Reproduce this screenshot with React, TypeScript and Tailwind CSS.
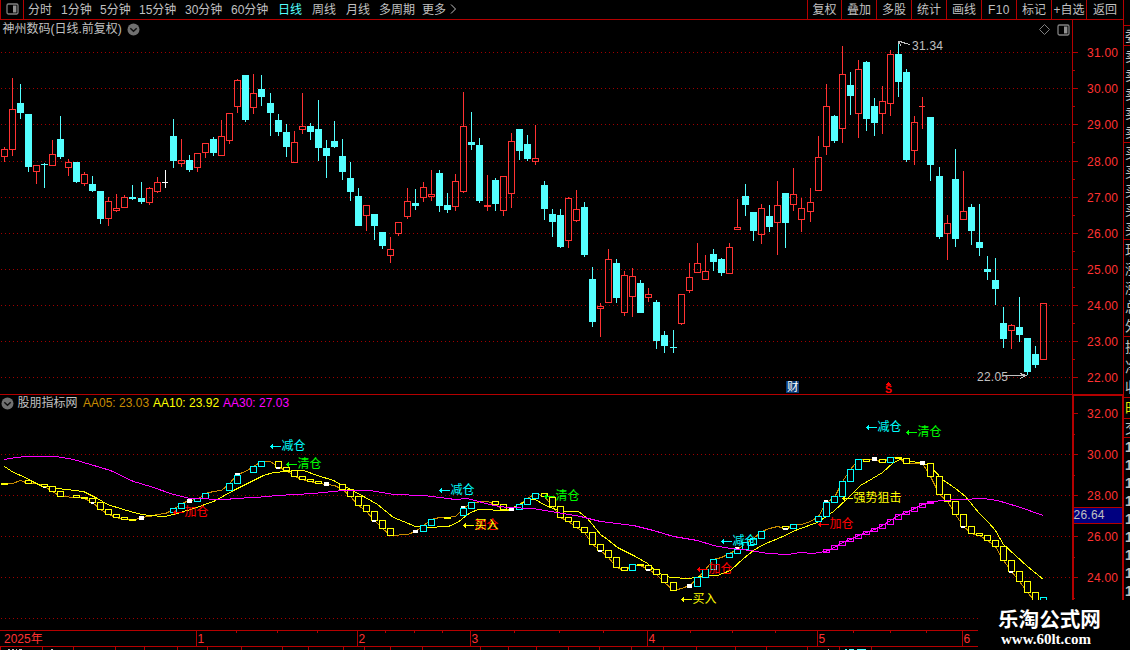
import type { ReactNode } from 'react';

type Kind = 'up' | 'down' | 'flat';
// centre x, high, body top, body bottom, low, kind
type Candle = [number, number, number, number, number, Kind];

const U = 'up' as const;
const D = 'down' as const;
const F = 'flat' as const;

const CANDLES: Candle[] = [
  [4, 147, 149, 157, 162, U], [12, 78, 109, 150, 156, U], [20, 84, 103, 113, 119, D], [28, 114, 114, 167, 172, D],
  [36, 165, 165, 172, 184, U], [44, 163, 164, 165, 188, D], [52, 140, 154, 166, 166, U], [60, 116, 139, 157, 159, D],
  [68, 159, 162, 168, 176, U], [76, 162, 162, 182, 183, D], [84, 172, 174, 184, 186, U], [92, 176, 184, 191, 192, D],
  [100, 191, 191, 219, 224, D], [108, 197, 201, 219, 226, U], [116, 194, 208, 211, 212, U], [124, 195, 197, 208, 208, U],
  [132, 185, 197, 199, 200, D], [141, 182, 198, 202, 204, D], [149, 187, 188, 203, 205, U], [157, 177, 182, 192, 193, U],
  [165, 170, 182, 183, 188, F], [173, 119, 136, 161, 168, D], [181, 139, 160, 164, 167, U], [189, 155, 160, 170, 172, D],
  [197, 153, 153, 168, 172, U], [205, 143, 143, 153, 158, U], [213, 137, 139, 153, 156, D], [221, 120, 136, 156, 156, U],
  [229, 113, 113, 141, 144, U], [237, 79, 80, 107, 113, U], [245, 75, 75, 120, 122, D], [253, 74, 93, 108, 114, U],
  [261, 75, 89, 97, 106, D], [270, 93, 103, 113, 136, D], [278, 114, 120, 132, 136, D], [286, 124, 132, 147, 157, D],
  [294, 131, 142, 163, 163, U], [302, 93, 126, 130, 134, U], [310, 123, 126, 132, 140, D], [318, 100, 129, 148, 161, D],
  [326, 140, 148, 156, 178, D], [334, 121, 141, 147, 148, D], [342, 139, 156, 172, 180, D], [350, 162, 178, 192, 201, D],
  [358, 188, 196, 226, 226, D], [366, 205, 205, 216, 231, U], [374, 214, 214, 226, 240, D], [382, 232, 232, 246, 249, D],
  [390, 237, 249, 256, 263, U], [398, 222, 222, 234, 236, U], [407, 188, 201, 217, 219, U], [415, 189, 203, 206, 210, D],
  [423, 182, 187, 198, 202, U], [431, 170, 194, 197, 201, U], [439, 170, 173, 206, 212, D], [447, 193, 205, 210, 213, D],
  [455, 174, 181, 207, 211, U], [463, 92, 126, 192, 193, U], [471, 112, 142, 145, 150, D], [479, 138, 145, 201, 203, D],
  [487, 175, 205, 207, 211, U], [495, 178, 180, 204, 211, D], [503, 176, 176, 211, 216, U], [511, 133, 141, 194, 208, U],
  [519, 129, 129, 151, 160, D], [527, 135, 144, 159, 161, D], [535, 125, 158, 162, 165, U], [544, 181, 185, 209, 220, D],
  [552, 209, 214, 222, 237, D], [560, 209, 215, 247, 248, D], [568, 197, 198, 241, 248, U], [576, 190, 209, 221, 222, U],
  [584, 202, 207, 255, 257, D], [592, 267, 279, 322, 327, D], [600, 303, 306, 309, 337, U], [608, 249, 259, 303, 303, U],
  [616, 259, 263, 298, 303, D], [624, 271, 275, 313, 316, U], [632, 268, 276, 297, 317, U], [640, 280, 283, 313, 313, D],
  [648, 288, 294, 298, 302, U], [656, 300, 302, 341, 349, D], [664, 331, 335, 346, 353, D], [673, 330, 347, 348, 353, D],
  [681, 294, 294, 324, 325, U], [689, 263, 277, 291, 293, U], [697, 243, 263, 273, 273, U], [705, 255, 271, 280, 280, U],
  [713, 249, 254, 262, 271, D], [721, 258, 259, 273, 276, D], [729, 243, 247, 274, 274, U], [737, 199, 227, 230, 230, U],
  [745, 184, 196, 205, 216, D], [753, 212, 212, 231, 241, D], [761, 204, 208, 235, 244, U], [769, 205, 216, 227, 232, D],
  [777, 181, 205, 223, 255, U], [785, 193, 193, 223, 248, D], [793, 168, 194, 205, 211, U], [801, 198, 208, 220, 232, U],
  [810, 188, 202, 212, 222, U], [818, 136, 157, 191, 191, U], [826, 84, 106, 147, 155, U], [834, 115, 116, 141, 143, D],
  [842, 46, 74, 129, 143, U], [850, 72, 85, 96, 115, D], [858, 60, 69, 114, 138, U], [866, 61, 62, 119, 131, D],
  [874, 98, 106, 123, 136, D], [882, 86, 101, 114, 134, U], [890, 50, 54, 104, 116, U], [898, 41, 54, 82, 97, D],
  [906, 69, 72, 160, 162, D], [914, 116, 122, 151, 165, U], [922, 97, 106, 107, 129, U], [930, 117, 117, 165, 181, D],
  [939, 167, 176, 237, 239, D], [947, 215, 223, 234, 260, U], [955, 149, 179, 239, 247, D], [963, 171, 211, 220, 220, U],
  [971, 204, 207, 231, 245, D], [979, 204, 242, 248, 256, D], [987, 256, 269, 272, 280, D], [995, 258, 280, 289, 305, D],
  [1003, 307, 323, 339, 348, D], [1011, 324, 325, 331, 349, U], [1019, 297, 327, 335, 342, D], [1027, 338, 338, 372, 375, D],
  [1035, 346, 354, 365, 368, D], [1043, 303, 303, 360, 360, U],
];

const KIND_COLOR: Record<Kind, string> = { up: '#ff3232', down: '#54ffff', flat: '#ffffff' };

const Y = '#ffff00';
const C = '#00ffff';
const W = '#ffffff';
const M = '#ff00ff';

// centre x, top, bottom, stroke
type Box = [number, number, number, string];

const BOXES: Box[] = [
  [28, 480, 484, Y], [44, 484, 487, Y], [52, 486, 492, Y], [60, 491, 497, Y], [76, 495, 498, Y], [84, 497, 499, Y],
  [92, 498, 503, Y], [100, 502, 510, Y], [108, 509, 515, Y], [116, 514, 518, Y], [124, 517, 520, Y], [132, 519, 521, Y],
  [173, 508, 513, C], [181, 503, 509, C], [197, 498, 502, C], [205, 493, 499, C], [229, 483, 491, C], [237, 475, 484, C],
  [253, 466, 473, C], [261, 461, 467, C], [278, 461, 468, Y], [286, 467, 471, Y], [294, 470, 477, Y], [302, 476, 480, Y],
  [310, 479, 482, Y], [318, 481, 484, Y], [342, 484, 490, Y], [350, 489, 497, Y], [358, 496, 506, Y], [366, 505, 512, Y],
  [374, 511, 521, Y], [382, 520, 529, Y], [390, 528, 536, Y], [423, 525, 532, C], [431, 519, 526, C], [447, 517, 519, Y],
  [463, 508, 516, C], [471, 502, 509, C], [495, 501, 505, Y], [503, 504, 510, Y], [519, 504, 510, C], [527, 498, 505, C],
  [535, 493, 499, C], [544, 493, 497, Y], [552, 497, 507, Y], [560, 506, 518, Y], [568, 517, 522, Y], [576, 521, 528, Y],
  [584, 527, 533, Y], [592, 532, 545, Y], [600, 544, 551, Y], [608, 550, 558, Y], [616, 557, 568, Y], [624, 567, 571, Y],
  [632, 564, 571, C], [640, 564, 566, Y], [648, 565, 570, Y], [656, 569, 575, Y], [664, 574, 583, Y], [673, 582, 591, Y],
  [697, 577, 587, C], [705, 569, 578, C], [713, 559, 570, C], [729, 553, 558, C], [737, 549, 554, C], [745, 542, 550, C],
  [753, 538, 545, C], [761, 531, 539, C], [785, 526, 529, Y], [793, 524, 529, C], [818, 516, 522, C], [826, 502, 517, C],
  [834, 496, 503, C], [842, 481, 497, C], [850, 469, 482, C], [858, 459, 470, C], [866, 459, 462, Y], [882, 459, 463, Y],
  [890, 457, 463, C], [898, 457, 459, Y], [906, 458, 464, Y], [930, 463, 477, Y], [939, 476, 495, Y], [947, 494, 502, Y],
  [955, 501, 515, Y], [963, 514, 527, Y], [971, 526, 534, Y], [979, 533, 536, Y], [987, 535, 541, Y], [995, 540, 547, Y],
  [1003, 546, 561, Y], [1011, 560, 572, Y], [1019, 571, 582, Y], [1027, 581, 593, Y], [1035, 592, 602, Y], [1043, 597, 602, C],
  [826, 549, 553, M], [834, 545, 550, M], [842, 541, 546, M], [850, 538, 542, M], [858, 534, 539, M], [866, 531, 535, M],
  [874, 528, 532, M], [882, 524, 529, M], [890, 519, 525, M], [898, 514, 520, M], [906, 511, 515, M], [914, 507, 512, M],
  [922, 503, 508, M], [930, 501, 504, M],
];

// x, y, width, height
const MARKS: [number, number, number, number][] = [
  [43, 487, 3, 1], [91, 502, 3, 2], [139, 516, 5, 4], [187, 499, 5, 4], [235, 473, 5, 2], [276, 467, 4, 2],
  [324, 482, 5, 4], [372, 520, 4, 2], [413, 530, 5, 3], [461, 506, 4, 2], [509, 508, 5, 3], [598, 550, 4, 2],
  [646, 569, 4, 2], [687, 584, 5, 4], [735, 547, 4, 2], [783, 528, 5, 2], [824, 500, 4, 2], [872, 457, 5, 4],
  [920, 461, 5, 4], [961, 526, 4, 2], [1009, 571, 4, 2],
];

const AA05 =
  '4,484 12,483 20,480 28,483 36,483 44,486 52,491 60,496 76,497 84,498 92,502 100,509 108,514 116,517 124,519 132,520 141,517 149,516 157,514 165,513 173,509 181,503 189,500 197,499 205,493 213,491 221,490 229,483 237,474 245,471 253,466 261,461 270,461 278,467 286,470 294,476 302,479 310,481 318,483 326,484 334,485 342,489 350,496 358,505 366,511 374,520 382,528 390,535 407,534 415,531 423,525 431,519 439,517 447,517 455,516 463,508 471,502 487,501 495,504 503,509 511,509 519,504 527,498 535,493 544,496 552,506 560,517 568,521 576,527 584,532 592,544 600,550 608,557 616,567 624,570 632,565 640,565 648,569 656,574 664,582 673,590 681,588 689,585 697,578 705,569 713,559 721,557 729,553 737,549 745,543 753,538 761,531 769,528 777,526 785,528 793,525 801,524 810,521 818,516 826,502 834,497 842,481 850,469 858,459 874,459 882,462 890,457 898,458 906,463 922,463 930,476 939,494 947,501 955,514 963,526 971,533 979,535 987,540 995,546 1003,560 1011,571 1019,581 1027,592 1035,601';
const AA10 =
  '4,466 13,472 25,477 30,480 40,485 57,488 83,491 97,498 107,504 123,509 137,513 148,515 165,516 180,512 193,508 213,501 233,490 247,483 263,475 273,472 287,471 303,470 317,475 333,480 350,489 363,496 377,504 393,517 403,521 415,526 425,527 448,526 457,522 470,512 478,509 507,510 515,506 527,500 535,499 543,504 560,511 578,511 587,518 600,534 607,539 617,547 633,555 647,563 657,572 670,577 688,578 707,575 717,575 730,570 743,558 753,550 763,544 780,537 797,529 817,522 833,511 847,498 860,485 867,481 882,472 893,462 900,459 923,463 930,466 942,479 955,488 965,496 978,512 988,522 995,530 1003,544 1015,555 1027,566 1043,579';
const AA30 =
  '4,459 15,457 27,456 55,456 73,459 90,464 110,470 133,481 150,486 173,494 190,498 227,499 233,498 255,497 277,495 312,493 343,490 370,490 393,494 423,495 455,499 467,498 493,505 507,507 533,508 550,511 580,516 600,521 633,525 653,530 673,536 697,540 713,545 730,548 750,550 767,553 787,554 800,552 813,553 825,551 834,547 842,542 850,539 858,535 866,532 874,529 882,525 890,520 898,515 906,512 914,508 922,504 930,502 940,500 960,499 983,498 997,500 1017,506 1043,515';

// arrow x, arrow y, colour, text
const SIGNALS: [number, number, string, string][] = [
  [271, 446, C, '减仓'], [287, 464, '#00ff00', '清仓'], [174, 512, '#ff0000', '加仓'], [440, 490, C, '减仓'],
  [464, 525, '#ff0000', '加仓'], [464, 525, Y, '买入'], [545, 496, '#00ff00', '清仓'], [682, 599, Y, '买入'],
  [698, 569, '#ff0000', '加仓'], [722, 541, C, '减仓'], [819, 524, '#ff0000', '加仓'], [843, 498, Y, '强势狙击'],
  [867, 427, C, '减仓'], [907, 432, '#00ff00', '清仓'],
];

const UPPER_GRID = [52, 88, 124, 161, 197, 233, 269, 305, 341, 377];
const LOWER_GRID = [454, 495, 536, 577, 618];
const RED = '#b40000';

function Grid({ rows }: { rows: number[] }) {
  return (
    <g stroke="#a00000" strokeDasharray="1 3">
      {rows.map((y) => (
        <line key={y} x1={1} x2={1072} y1={y + 0.5} y2={y + 0.5} />
      ))}
    </g>
  );
}

function CandleShape({ c: [x, high, top, bottom, low, kind] }: { c: Candle }) {
  const color = KIND_COLOR[kind];
  const h = bottom - top;
  const narrow = h === 1 && kind !== 'down';
  const hollow = kind === 'up' && h > 2;
  return (
    <g fill={color}>
      {top > high && <rect x={x} y={high} width={1} height={top - high} />}
      {low > bottom && <rect x={x} y={bottom} width={1} height={low - bottom} />}
      {hollow ? (
        <rect x={x - 2.5} y={top + 0.5} width={6} height={h - 1} fill="none" stroke={color} />
      ) : (
        <rect x={x - 3} y={top} width={narrow ? 6 : 7} height={h} />
      )}
    </g>
  );
}

function PanelIcon() {
  return (
    <svg width="13" height="12" viewBox="0 0 13 12" className="block shrink-0">
      <rect x="1" y="1" width="11" height="10" rx="1.4" fill="none" stroke="#808080" strokeWidth="1.3" />
      <rect x="7" y="2.5" width="3.4" height="7" fill="#909090" />
    </svg>
  );
}

function ChevronDot() {
  return (
    <svg width="13" height="13" viewBox="0 0 13 13" className="block shrink-0">
      <circle cx="6.5" cy="6.5" r="6" fill="#707070" />
      <path d="M3.3 5.2 6.5 8.2 9.7 5.2" fill="none" stroke="#101010" strokeWidth="1.5" />
    </svg>
  );
}

function UpperChart() {
  return (
    <svg width="1072" height="354" viewBox="0 40 1072 354" className="block" shapeRendering="crispEdges">
      <Grid rows={UPPER_GRID} />
      {CANDLES.map((c) => (
        <CandleShape key={c[0]} c={c} />
      ))}
      <g stroke="#c0c0c0" fill="none">
        <path d="M898.5 41.5H902M898.5 43.5V40.5M899 41.5 903 42.5 906 43.5 910 44.5M899 42.5 901 45.5" />
        <path d="M1003 375.5H1026M1020 373.5 1026 375.5 1020 378.5" />
      </g>
      <g fill="#c0c0c0" fontSize="12">
        <text x="912" y="50" textLength="31">31.34</text>
        <text x="977" y="381" textLength="31">22.05</text>
      </g>
      <rect x="786" y="381" width="13" height="12" fill="#0a3a78" />
      <text x="787" y="391" fontSize="11.5" fill="#ffffff">财</text>
      <path d="M885.5 385 888.5 382 892 385Z" fill="#ff0000" />
      <text x="885" y="393" fontSize="10.5" fontWeight="700" fill="#ff0000">S</text>
    </svg>
  );
}

function LowerChart() {
  return (
    <svg width="1072" height="218" viewBox="0 412 1072 218" className="block" shapeRendering="crispEdges">
      <Grid rows={LOWER_GRID} />
      <g fill="none" transform="translate(0.5 0.5)">
        <polyline points={AA05} stroke="#c88c00" />
        <polyline points={AA10} stroke={Y} />
      </g>
      <rect x="1" y="483" width="7" height="2" fill={Y} />
      {BOXES.map(([x, top, bottom, color]) => (
        <rect
          key={`${x}-${top}`}
          x={x - 2.5}
          y={top + 0.5}
          width={6}
          height={bottom - top - 1}
          fill={color === M ? 'none' : '#000000'}
          stroke={color}
        />
      ))}
      {MARKS.map(([x, y, w, h]) => (
        <rect key={x} x={x} y={y} width={w} height={h} fill={W} />
      ))}
      <g fill="none" transform="translate(0.5 0.5)">
        <polyline points={AA30} stroke={M} />
      </g>
      {SIGNALS.map(([x, y, color, text]) => (
        <g key={`${x}-${y}-${text}`}>
          <path d={`M${x} ${y + 0.5}h10M${x + 2} ${y - 1.5}l-2 2 2 2`} fill="none" stroke={color} />
          <text x={x + 10.5} y={y + 4} fontSize="12" fill={color}>
            {text}
          </text>
        </g>
      ))}
    </svg>
  );
}

function UpperAxis() {
  return (
    <svg width="51" height="374" viewBox="1072 20 51 374" className="block" shapeRendering="crispEdges">
      <g fill={RED}>
        <rect x="1072" y="20" width="1" height="374" />
        {UPPER_GRID.map((y) => (
          <rect key={y} x="1072" y={y} width="6" height="1" />
        ))}
        {UPPER_GRID.slice(0, 9).map((y) => (
          <rect key={y} x="1072" y={y + 18} width="3" height="1" />
        ))}
      </g>
      <g fill="#ff3232" fontSize="12">
        {UPPER_GRID.map((y, i) => (
          <text key={y} x="1087" y={y + 5} textLength="31">{`${31 - i}.00`}</text>
        ))}
      </g>
    </svg>
  );
}

function LowerAxis() {
  const rows = [413, 454, 495, 536, 577];
  return (
    <svg width="51" height="206" viewBox="1072 394 51 206" className="block" shapeRendering="crispEdges">
      <g fill={RED}>
        <rect x="1072" y="394" width="51" height="2" />
        <rect x="1072" y="394" width="2" height="206" />
        <rect x="1122" y="394" width="1" height="206" />
        {rows.map((y) => (
          <rect key={y} x="1072" y={y} width="6" height="1" />
        ))}
        {rows.map((y) => (
          <rect key={y} x="1072" y={y + 21} width="3" height="1" />
        ))}
        <rect x="1072" y="507" width="50" height="17" />
      </g>
      <rect x="1074" y="508" width="48" height="15" fill="#000080" />
      <g fill="#ff3232" fontSize="12">
        {rows.map((y, i) => (
          <text key={y} x="1087" y={y + 5} textLength="31">{`${32 - i * 2}.00`}</text>
        ))}
      </g>
      <text x="1073.5" y="519" fontSize="12" fill="#c0c0c0" textLength="31">26.64</text>
    </svg>
  );
}

function TimeAxis() {
  const months: [number, string][] = [[196, '1'], [357, '2'], [470, '3'], [647, '4'], [817, '5'], [962, '6']];
  const top = [236, 277, 317, 385, 414, 442, 514, 559, 603, 690, 732, 775, 853, 890, 926];
  const bottom = [0, 42, 73, 115, 144, 177, 207, 241, 282, 308, 343, 364, 390, 422, 480, 508, 536, 568, 599, 631, 663, 696, 735, 766, 807, 839, 871];
  return (
    <svg width="1123" height="20" viewBox="0 630 1123 20" className="block" shapeRendering="crispEdges">
      <g fill={RED}>
        <rect x="0" y="630" width="1123" height="1" />
        <rect x="0" y="646" width="1123" height="1" />
        {months.map(([x]) => (
          <rect key={x} x={x} y="630" width="1" height="16" />
        ))}
        {top.map((x) => (
          <rect key={x} x={x} y="630" width="1" height="3" />
        ))}
        {bottom.map((x) => (
          <rect key={x} x={x} y="647" width="1" height="3" />
        ))}
      </g>
      <g fill="#c0c0c0">
        <path d="M8 649h2v1h-2zM12 649h2v1h-2zM16 649h1v1h-1zM19 649h3v1h-3zM51 649h2v1h-2zM828 649h1v1h-1z" />
        <path d="M845 649h2v1h-2zM849 649h5v1h-5zM857 649h9v1h-9z" fill="#54ffff" />
      </g>
      <g fill="#ff3232" fontSize="12">
        <text x="4" y="643">2025年</text>
        {months.map(([x, label]) => (
          <text key={label} x={x + 1.5} y="643">{label}</text>
        ))}
      </g>
    </svg>
  );
}

function PeriodTab({ children, className }: { children: ReactNode; className: string }) {
  return <span className={`shrink-0 whitespace-nowrap ${className}`}>{children}</span>;
}

function Toolbar() {
  return (
    <header className="flex h-[20px] shrink-0 border-b border-[#b40000] text-[12px] leading-[20px] text-[#c0c0c0]">
      <div className="flex w-[24px] shrink-0 justify-center border-x border-[#b40000] pt-[3px]">
        <PanelIcon />
      </div>
      <nav className="flex grow pl-[4px]">
        <PeriodTab className="w-[33px]">分时</PeriodTab>
        <PeriodTab className="w-[39px]">1分钟</PeriodTab>
        <PeriodTab className="w-[39px]">5分钟</PeriodTab>
        <PeriodTab className="w-[46px]">15分钟</PeriodTab>
        <PeriodTab className="w-[46px]">30分钟</PeriodTab>
        <PeriodTab className="w-[47px]">60分钟</PeriodTab>
        <PeriodTab className="w-[34px] text-[#54ffff]">日线</PeriodTab>
        <PeriodTab className="w-[34px]">周线</PeriodTab>
        <PeriodTab className="w-[33px]">月线</PeriodTab>
        <PeriodTab className="w-[43px]">多周期</PeriodTab>
        <PeriodTab className="w-[28px]">更多</PeriodTab>
        <svg width="7" height="10" viewBox="0 0 7 10" className="mt-[4px] block">
          <path d="M1 0.5 5.5 5 1 9.5" fill="none" stroke="#c0c0c0" />
        </svg>
      </nav>
      <div className="flex text-center">
        <span className="w-[34px] border-l border-[#b40000]">复权</span>
        {['叠加', '多股', '统计', '画线'].map((t) => (
          <span key={t} className="w-[35px] border-l border-[#b40000]">{t}</span>
        ))}
        <span className="w-[35px] border-l border-[#b40000] tracking-[0.4px]">F10</span>
        <span className="w-[35px] border-l border-[#b40000]">标记</span>
        <span className="w-[35px] whitespace-nowrap border-l border-[#b40000]">+自选</span>
        <span className="w-[37px] border-l border-[#b40000]">返回</span>
      </div>
    </header>
  );
}

function SideSection({ chars, className }: { chars: string[]; className: string }) {
  return (
    <div className={`flex w-[6px] shrink-0 flex-col justify-around overflow-hidden border-t border-[#b40000] pl-[1px] ${className}`}>
      {chars.map((ch, i) => (
        <span key={i} className="block h-[16px] w-[14px] text-[14px] leading-[16px]">{ch}</span>
      ))}
    </div>
  );
}

function SideStrip() {
  return (
    <aside className="flex w-[7px] shrink-0 flex-col overflow-hidden border-l border-[#b40000] pt-[25px] text-[#c0c0c0]">
      <SideSection className="h-[20px]" chars={['委']} />
      <SideSection className="h-[97px]" chars={['卖', '卖', '卖', '卖', '卖']} />
      <SideSection className="h-[97px]" chars={['买', '买', '买', '买', '买']} />
      <SideSection className="h-[97px]" chars={['现', '涨', '涨', '总', '外']} />
      <SideSection className="h-[61px]" chars={['换', '净', '收']} />
      <SideSection className="h-[21px] text-[#e6e600]" chars={['时']} />
      <SideSection className="h-[19px]" chars={['交']} />
      <SideSection className="h-[163px] font-bold" chars={['1', '1', '1', '1', '1', '1', '1', '1', '1']} />
    </aside>
  );
}

export default function App() {
  return (
    <div className="relative flex h-[650px] w-[1130px] overflow-hidden bg-black font-['Liberation_Sans','Noto_Sans_CJK_SC',sans-serif]">
      <div className="flex w-[1123px] shrink-0 flex-col">
        <Toolbar />
        <section className="flex h-[374px] shrink-0">
          <div className="flex w-[1072px] shrink-0 flex-col">
            <div className="flex h-[20px] items-center pb-[1px] text-[12px] leading-[19px] text-[#c0c0c0]">
              <span className="w-[127px] whitespace-nowrap pl-[2.5px]">神州数码(日线.前复权)</span>
              <ChevronDot />
              <span className="grow" />
              <svg width="11" height="11" viewBox="0 0 11 11" className="mr-[7px] block">
                <path d="M5.5 0.5 10.5 5.5 5.5 10.5 0.5 5.5Z" fill="none" stroke="#808080" />
              </svg>
              <span className="mr-[2px]">
                <PanelIcon />
              </span>
            </div>
            <UpperChart />
          </div>
          <UpperAxis />
        </section>
        <section className="flex h-[236px] shrink-0">
          <div className="flex w-[1072px] shrink-0 flex-col border-t border-[#b40000]">
            <div className="flex h-[17px] shrink-0 items-center pb-[1px] pl-[1px] text-[12px] leading-[16px]">
              <ChevronDot />
              <span className="w-[69px] pl-[3.5px] text-[#c0c0c0]">股朋指标网</span>
              <span className="w-[70px] whitespace-nowrap text-[#c88c00]">AA05: 23.03</span>
              <span className="w-[70px] whitespace-nowrap text-[#ffff00]">AA10: 23.92</span>
              <span className="w-[70px] whitespace-nowrap text-[#ff00ff]">AA30: 27.03</span>
            </div>
            <LowerChart />
          </div>
          <LowerAxis />
        </section>
        <TimeAxis />
      </div>
      <SideStrip />
      <div className="absolute bottom-0 right-0 flex h-[50px] w-[152px] flex-col bg-black pl-[20px] pt-[7px] text-white">
        <span className="whitespace-nowrap text-[20.6px] font-bold leading-[25px]">乐淘公式网</span>
        <span className="whitespace-nowrap pl-[3px] font-['Liberation_Serif',serif] text-[15px] font-bold leading-[15px]">www.60lt.com</span>
      </div>
    </div>
  );
}
